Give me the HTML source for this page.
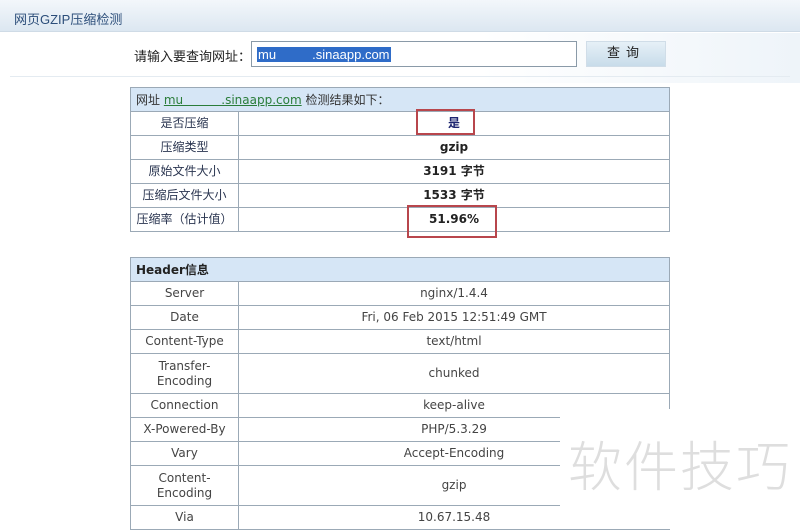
<!DOCTYPE html>
<html><head><meta charset="utf-8"><style>
*{margin:0;padding:0;box-sizing:border-box}
body{width:800px;height:529px;overflow:hidden;background:#fff;font-family:"DejaVu Sans","Noto Sans CJK SC",sans-serif;font-size:12px;color:#333;position:relative}
.top{position:absolute;left:0;top:0;width:800px;height:32px;background:linear-gradient(#f3f7fb,#dce7f1);border-bottom:1px solid #cfdbe6}
.top span{position:absolute;left:14px;top:9px;font-size:13px;color:#2c4e7a;font-family:"Liberation Sans","Noto Sans CJK SC",sans-serif}
.bg{position:absolute;left:0;top:33px;width:800px;height:50px;background:linear-gradient(90deg,#fff 60%,#eef4f9)}
.lab{position:absolute;left:134px;top:46px;font-size:13px;color:#222;font-family:"Liberation Sans","Noto Sans CJK SC",sans-serif}
.inp{position:absolute;left:251px;top:41px;width:326px;height:26px;border:1px solid #8a9aa8;background:#fff}
.inp span{position:absolute;left:5px;top:5px;background:#2f6cc8;color:#fff;font-size:13px;padding:0 1px;line-height:15px;font-family:"Liberation Sans",sans-serif}
.btn{position:absolute;left:586px;top:41px;width:80px;height:26px;background:linear-gradient(#e6f0f7,#c8dcea);border:1px solid #d0dde8;text-align:center;line-height:24px;font-size:13px;letter-spacing:6px;color:#222}
.sep{position:absolute;left:10px;top:76px;width:780px;height:1px;background:#e4ebf1}
table{position:absolute;left:130px;width:539px;border-collapse:collapse;table-layout:fixed}
td{border:1px solid #9ba9b6;text-align:center;height:24px;padding:0;line-height:15px}
th{background:#d6e6f6;border:1px solid #9ba9b6;height:24px;text-align:left;padding-left:5px;font-weight:normal}
#t1{top:87px}#t1 td.k{color:#2a3550}#t1 td.v{font-weight:bold;color:#222}
#t2{top:257px}#t2 td{color:#444}
a{color:#2a7d3a;text-decoration:underline}
.red{position:absolute;border:2px solid #b8464c}
.wm{position:absolute;left:560px;top:409px;width:240px;height:120px;background:#fff}
.wm span{position:absolute;left:8px;top:24px;font-size:54px;color:#dedede;letter-spacing:2px;font-family:"Noto Sans CJK SC",sans-serif;font-weight:300;line-height:60px}
</style></head><body>
<div class="top"><span>网页GZIP压缩检测</span></div>
<div class="bg"></div>
<div class="lab">请输入要查询网址：</div>
<div class="inp"><span>mu&nbsp;&nbsp;&nbsp;&nbsp;&nbsp;&nbsp;&nbsp;&nbsp;&nbsp;&nbsp;.sinaapp.com</span></div>
<div class="btn">查询</div>
<div class="sep"></div>
<table id="t1">
<colgroup><col style="width:108px"><col style="width:431px"></colgroup>
<tr><th colspan="2">网址 <a>mu&nbsp;&nbsp;&nbsp;&nbsp;&nbsp;&nbsp;&nbsp;&nbsp;&nbsp;&nbsp;.sinaapp.com</a> 检测结果如下：</th></tr>
<tr><td class="k">是否压缩</td><td class="v" style="color:#1d2570">是</td></tr>
<tr><td class="k">压缩类型</td><td class="v">gzip</td></tr>
<tr><td class="k">原始文件大小</td><td class="v">3191 字节</td></tr>
<tr><td class="k">压缩后文件大小</td><td class="v">1533 字节</td></tr>
<tr><td class="k">压缩率（估计值）</td><td class="v">51.96%</td></tr>
</table>
<table id="t2">
<colgroup><col style="width:108px"><col style="width:431px"></colgroup>
<tr><th colspan="2" style="font-weight:bold;color:#222">Header信息</th></tr>
<tr><td class="k">Server</td><td>nginx/1.4.4</td></tr>
<tr><td class="k">Date</td><td>Fri, 06 Feb 2015 12:51:49 GMT</td></tr>
<tr><td class="k">Content-Type</td><td>text/html</td></tr>
<tr><td class="k" style="height:40px">Transfer-<br>Encoding</td><td>chunked</td></tr>
<tr><td class="k">Connection</td><td>keep-alive</td></tr>
<tr><td class="k">X-Powered-By</td><td>PHP/5.3.29</td></tr>
<tr><td class="k">Vary</td><td>Accept-Encoding</td></tr>
<tr><td class="k" style="height:40px">Content-<br>Encoding</td><td>gzip</td></tr>
<tr><td class="k">Via</td><td>10.67.15.48</td></tr>
</table>
<div class="red" style="left:416px;top:109px;width:59px;height:26px"></div>
<div class="red" style="left:407px;top:205px;width:90px;height:33px"></div>
<div class="wm"><span>软件技巧</span></div>
</body></html>
